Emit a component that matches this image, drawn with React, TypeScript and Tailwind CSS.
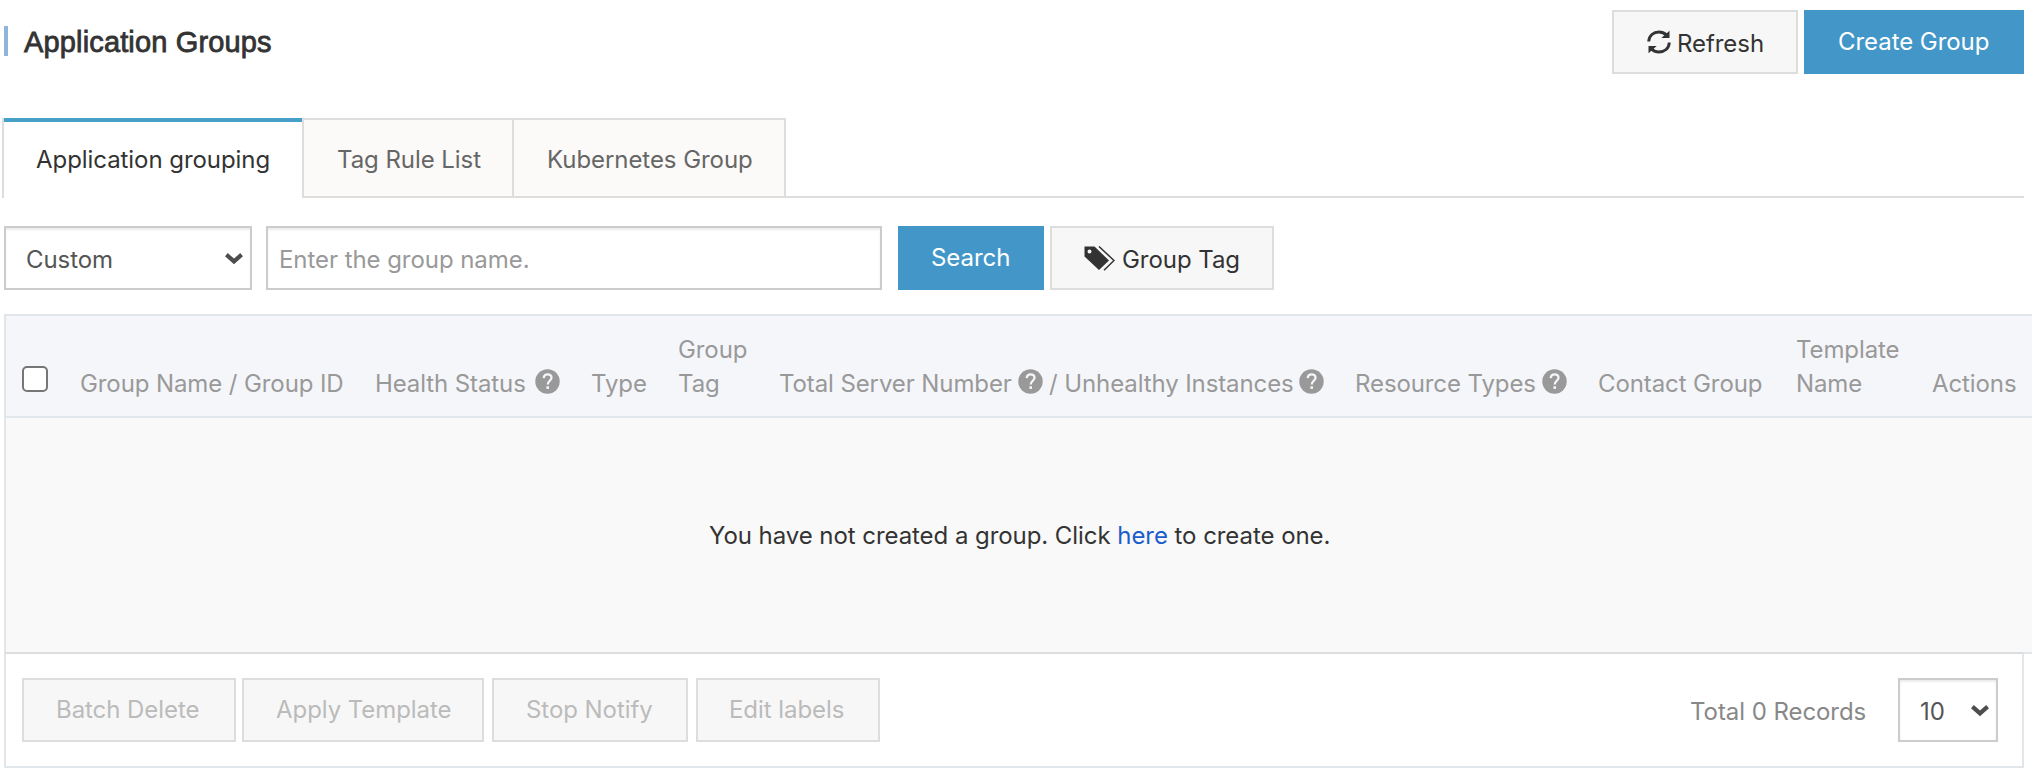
import React from "react";

const font = "font-['Inter',sans-serif]";

function Chevron() {
  return (
    <svg width="20" height="14" viewBox="0 0 20 14" fill="none" className="shrink-0">
      <path d="M2.4 1.7 L10 8.4 L17.6 1.7" stroke="#4d4d4d" strokeWidth="4.2" />
    </svg>
  );
}

function Help() {
  return (
    <svg width="25" height="25" viewBox="0 0 25 25" className="mb-[5px] shrink-0">
      <circle cx="12.5" cy="12.5" r="12.2" fill="#999" />
      <path d="M8.7 9.2 C8.9 6.6 10.4 5.4 12.6 5.4 C15 5.4 16.5 6.9 16.5 8.8 C16.5 11.6 12.7 12 12.7 15.6" fill="none" stroke="#f5f6fa" strokeWidth="2.3" />
      <rect x="11.4" y="17.3" width="2.6" height="2.6" fill="#f5f6fa" />
    </svg>
  );
}

function RefreshIcon() {
  return (
    <svg width="24" height="24" viewBox="0 0 24 24" className="shrink-0">
      <path d="M1.7 11.5 C2 5.5 6.5 2 12 2 C15 2 17.3 3 19.3 4.9 M22.3 12.5 C22 18.5 17.5 22 12 22 C9 22 6.7 21 4.7 19.1" fill="none" stroke="#333" strokeWidth="2.9" />
      <path d="M22.5 0.8 V8 H14.3 Z M1.5 23.2 V16 H9.7 Z" fill="#333" />
    </svg>
  );
}

function TagsIcon() {
  return (
    <svg width="31" height="25" viewBox="0 0 31 25" className="shrink-0">
      <path fillRule="evenodd" d="M0.5 0.5 H10.5 L25 14.5 L15 24 L0.5 10.5 Z M5.5 3.6 A2 2 0 1 0 5.5 7.6 A2 2 0 1 0 5.5 3.6 Z" fill="#333" />
      <path d="M15 0.5 L30 14.5 L20 24.3" fill="none" stroke="#333" strokeWidth="1.5" />
    </svg>
  );
}

function T({ children, className = "" }: { children: React.ReactNode; className?: string }) {
  return <span className={`whitespace-nowrap ${className}`}>{children}</span>;
}

const disabledBtn = "flex h-16 items-center border-2 border-[#ddd] bg-[#f7f7f7] text-[#bbb]";
const field = "flex h-16 items-center border-2 border-[#ccc] pt-1 shadow-[inset_0_2px_2px_rgba(0,0,0,0.075)]";

export default function App() {
  return (
    <div className={`${font} h-[778px] w-[2032px] overflow-hidden bg-white text-2xl leading-[34px] tracking-[-0.06px] text-[#333]`}>
      <header className="flex h-[118px] items-start pl-1 pr-2 pt-[10px]">
        <div className="mt-4 h-[30px] w-1 bg-[#90b4dc]" />
        <h1 className="ml-4 mt-[15px] whitespace-nowrap font-['Liberation_Sans',sans-serif] text-[29px] leading-[34px] tracking-[0.15px] [-webkit-text-stroke:0.8px_#333]">
          Application Groups
        </h1>
        <button className="ml-auto flex h-16 w-[186px] items-center border-2 border-[#ddd] bg-[#f7f7f7] pl-[33px]">
          <RefreshIcon />
          <T className="ml-1.5 mt-1">Refresh</T>
        </button>
        <button className="ml-1.5 flex h-16 w-[220px] items-center bg-[#4397c8] pl-[34px] text-white">
          <T>Create Group</T>
        </button>
      </header>

      <nav className="flex h-20 pl-[2px] pr-2">
        <div className="flex w-[300px]">
          <div className="w-[2px] bg-[#ddd]" />
          <div className="flex grow items-center border-t-4 border-[#46a0c8] pl-8">
            <T>Application grouping</T>
          </div>
        </div>
        <div className="flex w-[210px] items-center border-2 border-r-0 border-[#ddd] bg-[#fbfaf8] pl-[33px] pt-1 text-[#666]">
          <T>Tag Rule List</T>
        </div>
        <div className="flex w-[274px] items-center border-2 border-[#ddd] bg-[#fbfaf8] pl-[33px] pt-1 text-[#666]">
          <T>Kubernetes Group</T>
        </div>
        <div className="grow border-b-2 border-[#ddd]" />
      </nav>

      <section className="flex h-[116px] pl-1 pt-7">
        <div className={`${field} w-[248px] justify-between pl-5 pr-[6px] text-[#555]`}>
          <T>Custom</T>
          <Chevron />
        </div>
        <div className={`${field} ml-[14px] w-[616px] pl-[11px] text-[#999]`}>
          <T>Enter the group name.</T>
        </div>
        <button className="ml-4 flex h-16 w-[146px] items-center bg-[#4397c8] pl-[33px] text-white">
          <T>Search</T>
        </button>
        <button className="ml-1.5 flex h-16 w-[224px] items-center border-2 border-[#ddd] bg-[#f7f7f7] pl-8">
          <TagsIcon />
          <T className="ml-[7px] mt-1">Group Tag</T>
        </button>
      </section>

      <section className="ml-1 border-l-2 border-[#e1e6eb]">
        <div className="flex h-[104px] items-end border-y-2 border-[#e1e6eb] bg-[#f5f6fa] pb-[15px] tracking-[-0.1px] text-[#999]">
          <div className="mb-[9px] ml-4 h-[26px] w-[26px] shrink-0 rounded-[5px] border-2 border-[#767676] bg-white" />
          <div className="ml-8 w-[295px] shrink-0"><T>Group Name / Group ID</T></div>
          <div className="flex w-[216px] shrink-0 items-center">
            <T className="w-[160px]">Health Status</T><Help />
          </div>
          <div className="w-[87px] shrink-0"><T>Type</T></div>
          <div className="w-[101px] shrink-0"><T>Group<br />Tag</T></div>
          <div className="flex w-[576px] shrink-0 items-center">
            <T className="w-[239px]">Total Server Number</T><Help />
            <T className="ml-[6px] w-[250px]">/ Unhealthy Instances</T><Help />
          </div>
          <div className="flex w-[243px] shrink-0 items-center">
            <T className="w-[187px]">Resource Types</T><Help />
          </div>
          <div className="w-[198px] shrink-0"><T>Contact Group</T></div>
          <div className="w-[136px] shrink-0"><T>Template<br />Name</T></div>
          <T>Actions</T>
        </div>
        <div className="flex h-[234px] items-center bg-[#f9f9f9] pl-[703px] pt-[2px]">
          <T>You have not created a group. Click <a className="text-[#1c5dcb]">here</a> to create one.</T>
        </div>
      </section>

      <footer className="flex">
        <div className="ml-1 flex h-[116px] w-[2020px] items-start border-2 border-[#e1e6eb] border-t-[#ddd] pl-4 pr-6 pt-6">
          <button className={`${disabledBtn} w-[214px] pl-8`}><T>Batch Delete</T></button>
          <button className={`${disabledBtn} ml-1.5 w-[242px] pl-8`}><T>Apply Template</T></button>
          <button className={`${disabledBtn} ml-2 w-[196px] pl-8`}><T>Stop Notify</T></button>
          <button className={`${disabledBtn} ml-2 w-[184px] pl-[31px]`}><T>Edit labels</T></button>
          <div className="ml-auto mt-[17px] w-[208px] text-[#888]"><T>Total 0 Records</T></div>
          <div className={`${field} w-[100px] justify-between pl-5 pr-[6px] text-[#555]`}>
            <T>10</T>
            <Chevron />
          </div>
        </div>
        <div className="h-[2px] grow bg-[#e1e6eb]" />
      </footer>
    </div>
  );
}
